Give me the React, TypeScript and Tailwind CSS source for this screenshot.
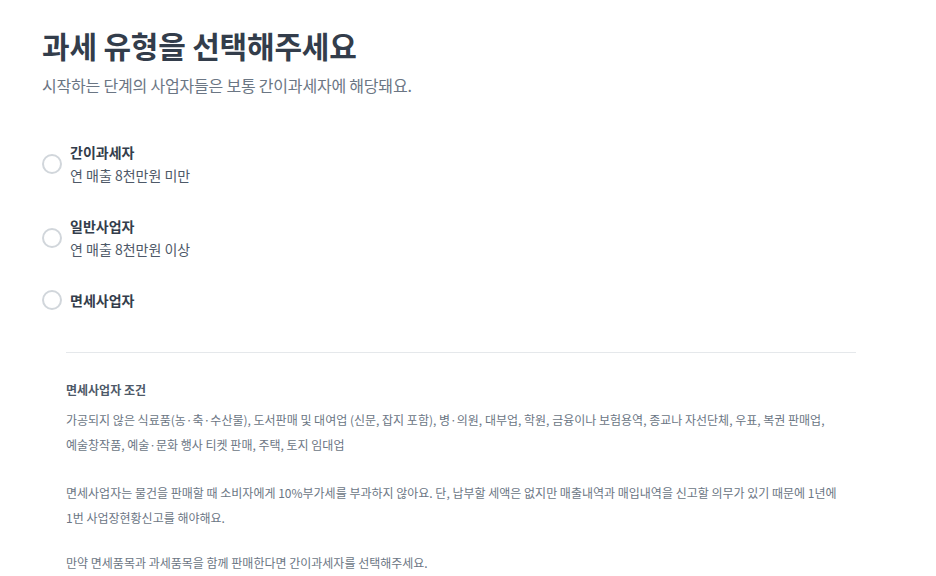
import type { JSX } from "react";

const options = [
    { id: "simple", title: "간이과세자", desc: "연 매출 8천만원 미만" },
    { id: "general", title: "일반사업자", desc: "연 매출 8천만원 이상" },
    { id: "exempt", title: "면세사업자", desc: null },
];

function Radio(): JSX.Element {
    return <span className="block h-5 w-5 shrink-0 rounded-full border-2 border-[#d1d6db] bg-white" />;
}

export default function App(): JSX.Element {
    return (
        <div
            className="min-h-[576px] bg-white px-[42px] pt-[25px] text-[#333d4b]"
            style={{ fontFamily: '"Noto Sans CJK KR", "Noto Sans", sans-serif' }}
        >
            <h1 className="text-[30px] font-bold leading-[40px] tracking-[-0.2px] text-[#333d4b]">과세 유형을 선택해주세요</h1>
            <p className="mt-[8px] text-[16px] leading-[24px] tracking-[-0.2px] text-[#6b7684]">
                시작하는 단계의 사업자들은 보통 간이과세자에 해당돼요.
            </p>

            <ul className="mt-[44px] flex flex-col gap-[28px]">
                {options.map((o) => (
                    <li key={o.id} className="flex items-center gap-[8px]">
                        <Radio />
                        <div className="flex flex-col">
                            <span className="text-[14px] font-bold leading-[22px] text-[#333d4b]">{o.title}</span>
                            {o.desc && (
                                <span className="text-[14px] leading-[24px] text-[#4e5968]">{o.desc}</span>
                            )}
                        </div>
                    </li>
                ))}
            </ul>

            <div className="ml-[24px] mr-[38px] mt-[41px] border-t border-[#e5e8eb] pt-[24px] text-[12px] leading-[25px] text-[#6b7684]">
                <p className="font-bold text-[#4e5968]">면세사업자 조건</p>
                <p className="mt-[5px]">
                    가공되지 않은 식료품(농·축·수산물), 도서판매 및 대여업 (신문, 잡지 포함), 병·의원, 대부업, 학원, 금융이나 보험용역, 종교나 자선단체, 우표, 복권 판매업,
                    <br />
                    예술창작품, 예술·문화 행사 티켓 판매, 주택, 토지 임대업
                </p>
                <p className="mt-[23px]">
                    면세사업자는 물건을 판매할 때 소비자에게 10%부가세를 부과하지 않아요. 단, 납부할 세액은 없지만 매출내역과 매입내역을 신고할 의무가 있기 때문에 1년에
                    <br />
                    1번 사업장현황신고를 해야해요.
                </p>
                <p className="mt-[20px]">만약 면세품목과 과세품목을 함께 판매한다면 간이과세자를 선택해주세요.</p>
            </div>
        </div>
    );
}
